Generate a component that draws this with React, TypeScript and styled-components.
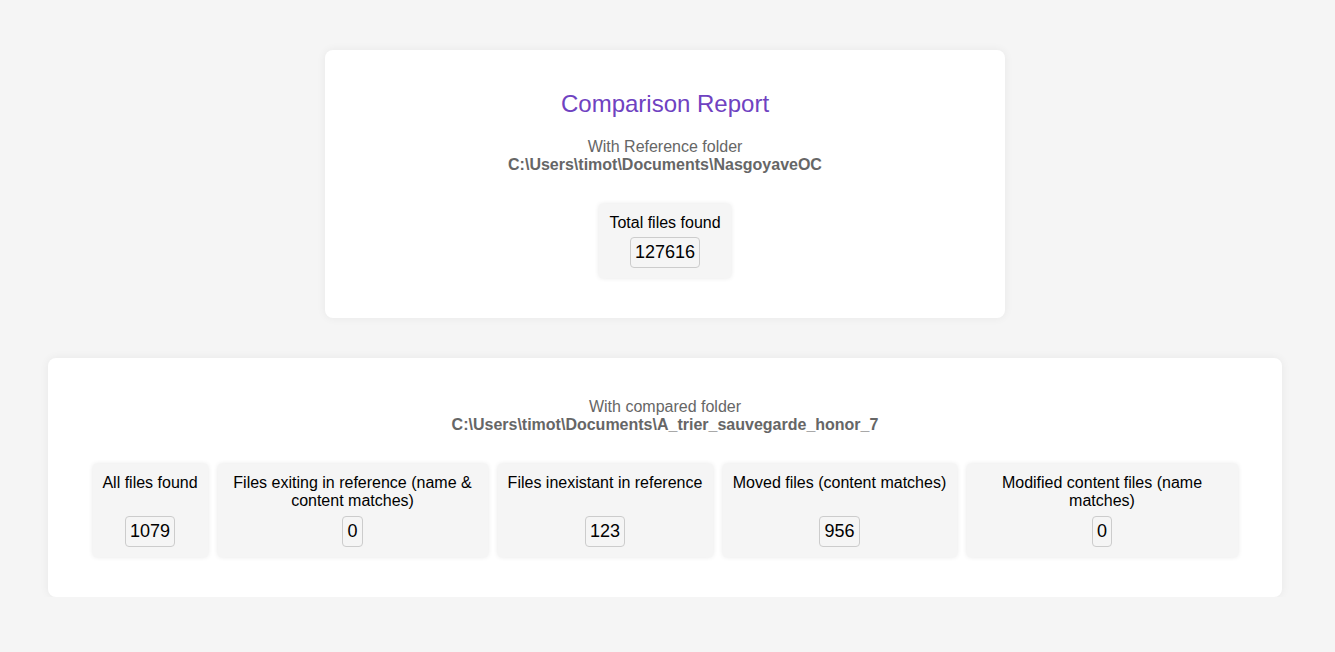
import React from "react";
import styled, { createGlobalStyle } from "styled-components";

const Global = createGlobalStyle`
  html, body { margin: 0; padding: 0; background: #f5f5f5; }
  body { font-family: "Liberation Sans", Arial, sans-serif; }
`;

const Page = styled.div`
  display: flex;
  flex-direction: column;
  align-items: center;
  padding: 50px 5px 0 0;
  gap: 40px;
`;

const Card = styled.section<{ $width: number }>`
  width: ${(p) => p.$width}px;
  box-sizing: border-box;
  background: #fff;
  border-radius: 8px;
  box-shadow: 0 0 10px rgba(0, 0, 0, 0.06);
  padding: 40px 0 40px;
  display: flex;
  flex-direction: column;
  align-items: center;
`;

const Title = styled.h1`
  margin: 0 0 20px;
  font-size: 24px;
  line-height: 28px;
  font-weight: 400;
  color: #6f42c1;
`;

const FolderInfo = styled.div`
  text-align: center;
  color: #666;
  font-size: 16px;
  line-height: 18px;
  margin-bottom: 30px;
`;

const FolderPath = styled.div`
  font-weight: 700;
`;

const StatRow = styled.div`
  display: flex;
  gap: 10px;
  justify-content: center;
`;

const StatBox = styled.div<{ $width?: number }>`
  ${(p) => (p.$width ? `width: ${p.$width}px;` : "")}
  box-sizing: border-box;
  background: #f5f5f5;
  border-radius: 4px;
  box-shadow: 0 0 5px rgba(0, 0, 0, 0.1);
  padding: 10px 10px 10px;
  display: flex;
  flex-direction: column;
  align-items: center;
  justify-content: space-between;
  gap: 5px;
  text-align: center;
`;

const StatLabel = styled.div`
  font-size: 16px;
  line-height: 18px;
  color: #000;
`;

const StatValue = styled.div`
  border: 1px solid #ccc;
  border-radius: 4px;
  padding: 0 4px;
  font-size: 18px;
  line-height: 29px;
  color: #000;
  background: #f5f5f5;
`;

const BottomStatBox = styled(StatBox)`
  height: 93px;
  padding: 10px 4px 10px;
  gap: 0;
  line-height: 17px;
`;

const stats = [
  { label: "All files found", value: "1079", width: 115 },
  { label: "Files exiting in reference (name & content matches)", value: "0", width: 270 },
  { label: "Files inexistant in reference", value: "123", width: 215 },
  { label: "Moved files (content matches)", value: "956", width: 234 },
  { label: "Modified content files (name matches)", value: "0", width: 271 },
];

export default function App() {
  return (
    <>
      <Global />
      <Page>
        <Card $width={680}>
          <Title>Comparison Report</Title>
          <FolderInfo>
            <div>With Reference folder</div>
            <FolderPath>C:\Users\timot\Documents\NasgoyaveOC</FolderPath>
          </FolderInfo>
          <StatBox>
            <StatLabel>Total files found</StatLabel>
            <StatValue>127616</StatValue>
          </StatBox>
        </Card>
        <Card $width={1234}>
          <FolderInfo>
            <div>With compared folder</div>
            <FolderPath>C:\Users\timot\Documents\A_trier_sauvegarde_honor_7</FolderPath>
          </FolderInfo>
          <StatRow>
            {stats.map((s) => (
              <BottomStatBox key={s.label} $width={s.width}>
                <StatLabel>{s.label}</StatLabel>
                <StatValue>{s.value}</StatValue>
              </BottomStatBox>
            ))}
          </StatRow>
        </Card>
      </Page>
    </>
  );
}
